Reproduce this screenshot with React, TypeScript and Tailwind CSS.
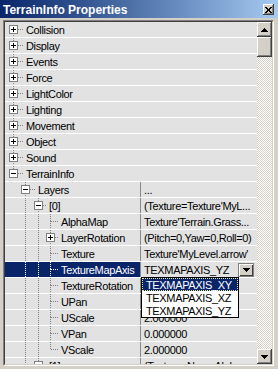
import React from "react";

type Row = {
  name: string;
  level: number;
  box?: "+" | "-";
  first?: boolean;
  more?: boolean;
  guides?: number[];
  value?: string;
  cat?: boolean;
  selected?: boolean;
};

// tree geometry, x relative to the list's left edge
const CENTER = [8, 20, 33, 45];
const TEXT_X = [21, 33, 44, 56];

const ROWS: Row[] = [
  { name: "Collision", level: 0, box: "+", first: true, more: true, cat: true },
  { name: "Display", level: 0, box: "+", more: true, cat: true },
  { name: "Events", level: 0, box: "+", more: true, cat: true },
  { name: "Force", level: 0, box: "+", more: true, cat: true },
  { name: "LightColor", level: 0, box: "+", more: true, cat: true },
  { name: "Lighting", level: 0, box: "+", more: true, cat: true },
  { name: "Movement", level: 0, box: "+", more: true, cat: true },
  { name: "Object", level: 0, box: "+", more: true, cat: true },
  { name: "Sound", level: 0, box: "+", more: true, cat: true },
  { name: "TerrainInfo", level: 0, box: "-", cat: true },
  { name: "Layers", level: 1, box: "-", more: true, value: "..." },
  { name: "[0]", level: 2, box: "-", more: true, guides: [1], value: "(Texture=Texture'MyL..." },
  { name: "AlphaMap", level: 3, more: true, guides: [1, 2], value: "Texture'Terrain.Grass..." },
  { name: "LayerRotation", level: 3, box: "+", more: true, guides: [1, 2], value: "(Pitch=0,Yaw=0,Roll=0)" },
  { name: "Texture", level: 3, more: true, guides: [1, 2], value: "Texture'MyLevel.arrow'" },
  { name: "TextureMapAxis", level: 3, more: true, guides: [1, 2], value: "TEXMAPAXIS_YZ", selected: true },
  { name: "TextureRotation", level: 3, more: true, guides: [1, 2], value: "0" },
  { name: "UPan", level: 3, more: true, guides: [1, 2], value: "0.000000" },
  { name: "UScale", level: 3, more: true, guides: [1, 2], value: "2.000000" },
  { name: "VPan", level: 3, more: true, guides: [1, 2], value: "0.000000" },
  { name: "VScale", level: 3, guides: [1, 2], value: "2.000000" },
  { name: "[1]", level: 2, box: "-", more: true, guides: [1], value: "(Texture=None,Alpha..." },
];

const RAISED =
  "bg-[#d4d0c8] shadow-[inset_-1px_-1px_0_#404040,inset_1px_1px_0_#ffffff,inset_-2px_-2px_0_#808080]";

export default function App() {
  return (
    <div className="w-[278px] h-[369px] bg-[#d4d0c8] overflow-hidden font-['Liberation_Sans',Arial,sans-serif] text-[11px] tracking-[-0.35px] text-black">
      {/* Caption */}
      <div className="h-[18px] flex items-start justify-between bg-linear-to-r from-[#0a246a] to-[#a6caf0]">
        <div className="pl-[3px] pt-[2px] text-[12px] leading-[16px] font-bold tracking-normal text-white whitespace-nowrap">
          TerrainInfo Properties
        </div>
        <div className={`mt-[4px] mr-[4px] w-[11px] h-[11px] flex items-center justify-center ${RAISED}`}>
          <svg width="7" height="6" viewBox="0 0 7 6" shapeRendering="crispEdges">
            <path d="M0 0h2v1h-2zM5 0h2v1h-2zM1 1h2v1h-2zM4 1h2v1h-2zM2 2h3v2h-3zM1 4h2v1h-2zM4 4h2v1h-2zM0 5h2v1h-2zM5 5h2v1h-2z" fill="#000" />
          </svg>
        </div>
      </div>

      {/* Sunken list frame */}
      <div className="mt-[2px] ml-[3px] mr-[4px] h-[346px] border border-t-[#808080] border-l-[#808080] border-b-white border-r-white">
        <div className="h-full flex border border-t-[#404040] border-l-[#404040] border-b-[#d4d0c8] border-r-[#d4d0c8]">
          <div className="relative flex-1 min-w-0 overflow-hidden flex flex-col">
            {ROWS.map((r) => (
              <PropRow key={r.name} row={r} />
            ))}

            {/* Open combo list */}
            <div className="absolute left-[136px] top-[255px] w-[98px] border border-black bg-white flex flex-col">
              <div className="h-[13px] bg-[#0a246a] text-white border border-dotted border-[#e8e4a0] pl-[3px] leading-[12px] whitespace-nowrap">
                TEXMAPAXIS_XY
              </div>
              <div className="h-[13px] pl-[4px] leading-[14px] whitespace-nowrap">TEXMAPAXIS_XZ</div>
              <div className="h-[13px] pl-[4px] leading-[14px] whitespace-nowrap">TEXMAPAXIS_YZ</div>
            </div>
          </div>

          {/* Scrollbar */}
          <div className="w-[15px] shrink-0 flex flex-col bg-[image:repeating-conic-gradient(#d4d0c8_0_25%,#ffffff_0_50%)] bg-[length:2px_2px]">
            <div className={`h-[15px] flex items-center justify-center ${RAISED}`}>
              <svg width="7" height="4" viewBox="0 0 7 4" shapeRendering="crispEdges">
                <path d="M3 0h1v1h1v1h1v1h1v1h-7v-1h1v-1h1v-1h1z" fill="#000" />
              </svg>
            </div>
            <div className={`h-[20px] ${RAISED}`} />
            <div className="flex-1" />
            <div className={`h-[15px] flex items-center justify-center ${RAISED}`}>
              <svg width="7" height="4" viewBox="0 0 7 4" shapeRendering="crispEdges">
                <path d="M0 0h7v1h-1v1h-1v1h-1v1h-1v-1h-1v-1h-1v-1h-1z" fill="#000" />
              </svg>
            </div>
          </div>
        </div>
      </div>
    </div>
  );
}

function PropRow({ row }: { row: Row }) {
  return (
    <div className="h-[16px] shrink-0 flex bg-[#e2e2e2] border-b border-white">
      <div
        className={`${row.cat ? "flex-1" : "w-[135px]"} shrink-0 flex items-start overflow-hidden ${
          row.selected ? "bg-[#0a246a] text-white" : ""
        }`}
      >
        <Gutter row={row} />
        <span className="leading-[16px] whitespace-nowrap">{row.name}</span>
      </div>
      {!row.cat && (
        <div className="flex-1 min-w-0 flex items-start border-l border-[#8a8a8a] pl-[3px] overflow-hidden">
          <span className="flex-1 min-w-0 leading-[16px] whitespace-nowrap overflow-hidden">{row.value}</span>
          {row.selected && (
            <div className="mt-[1px] mr-[3px] w-[16px] h-[14px] shrink-0 flex items-center justify-center bg-[#d4d0c8] border border-[#808080] shadow-[inset_1px_1px_0_#ffffff,inset_-1px_-1px_0_#404040]">
              <svg width="7" height="4" viewBox="0 0 7 4" shapeRendering="crispEdges">
                <path d="M0 0h7v1h-1v1h-1v1h-1v1h-1v-1h-1v-1h-1v-1h-1z" fill="#000" />
              </svg>
            </div>
          )}
        </div>
      )}
    </div>
  );
}

function Gutter({ row }: { row: Row }) {
  const c = CENTER[row.level];
  const w = TEXT_X[row.level];
  const ink = row.selected ? "#ffffff" : "#808080";
  const dot = { stroke: ink, strokeDasharray: "1 1" };
  return (
    <svg width={w} height={15} className="block shrink-0" shapeRendering="crispEdges">
      {(row.guides ?? []).map((l) => (
        <line key={l} x1={CENTER[l] + 0.5} x2={CENTER[l] + 0.5} y1={0} y2={15} {...dot} />
      ))}
      {!row.first && <line x1={c + 0.5} x2={c + 0.5} y1={0} y2={8} {...dot} />}
      {row.more && <line x1={c + 0.5} x2={c + 0.5} y1={7} y2={15} {...dot} />}
      <line x1={row.box ? c + 5 : c + 1} x2={w - 2} y1={7.5} y2={7.5} {...dot} />
      {row.box && (
        <g>
          <rect x={c - 3.5} y={3.5} width={8} height={8} fill="#ffffff" stroke="#808080" />
          <line x1={c - 2} x2={c + 3} y1={7.5} y2={7.5} stroke="#000" />
          {row.box === "+" && <line x1={c + 0.5} x2={c + 0.5} y1={5} y2={10} stroke="#000" />}
        </g>
      )}
    </svg>
  );
}
